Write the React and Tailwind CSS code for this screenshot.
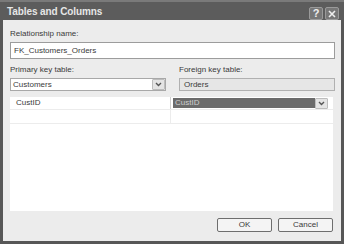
import React from "react";

const Chevron = () => (
  <svg width="7" height="5" viewBox="0 0 7 5" fill="none">
    <path d="M1 1 L3.5 3.5 L6 1" stroke="#555" strokeWidth="1.4" />
  </svg>
);

const DropBtn = () => (
  <div className="w-[13px] h-[11px] bg-[#e4e4e4] border border-[#bdbdbd] rounded-[1px] flex items-center justify-center">
    <Chevron />
  </div>
);

export default function App() {
  return (
    <div className="w-[344px] h-[244px] bg-[#575757] flex flex-col font-['Liberation_Sans',sans-serif] text-[#3a3a3a]">
      {/* Title bar */}
      <div className="h-[20px] flex items-center justify-between pl-[7px] pr-[5px] border-t-2 border-[#7a7a7a] bg-[#5c5c5c]">
        <span className="text-[10px] font-bold text-[#e6e6e6] tracking-[-0.1px] mt-[1px]">Tables and Columns</span>
        <div className="flex gap-[2px] mt-[5px]">
          <div className="w-[14px] h-[13px] rounded-[2px] border border-[#9a9a9a] bg-[#777] flex items-center justify-center text-[11px] font-bold leading-none text-[#eee]">?</div>
          <div className="w-[14px] h-[13px] rounded-[2px] border border-[#9a9a9a] bg-[#777] flex items-center justify-center">
            <svg width="8" height="8" viewBox="0 0 8 8">
              <path d="M1 1 L7 7 M7 1 L1 7" stroke="#eee" strokeWidth="1.6" />
            </svg>
          </div>
        </div>
      </div>

      {/* Body */}
      <div className="flex-1 flex flex-col bg-[#ececec] mx-[3px] mb-[3px] pl-[7px] pr-[6px] pt-[9px] pb-[9px] text-[8px] leading-[10px]">
        <div>Relationship name:</div>
        <div className="mt-[3px] h-[17px] bg-white border border-[#9c9c9c] flex items-center pl-[3px]">FK_Customers_Orders</div>

        <div className="mt-[6px] flex gap-[13px]">
          <div className="w-[156px] flex flex-col">
            <div>Primary key table:</div>
            <div className="mt-[3px] h-[13px] bg-white border border-[#a8a8a8] flex items-center justify-between pl-[2px]">
              <span>Customers</span>
              <DropBtn />
            </div>
          </div>
          <div className="flex-1 flex flex-col">
            <div>Foreign key table:</div>
            <div className="mt-[3px] h-[13px] bg-[#e6e6e6] border border-[#b0b0b0] flex items-center pl-[4px]">Orders</div>
          </div>
        </div>

        {/* Grid */}
        <div className="mt-[6px] h-[114px] mr-[2px] bg-white flex flex-col">
          <div className="h-[13px] flex border-b border-[#ececec]">
            <div className="w-[161px] border-r border-[#cfcfcf] pl-[6px] flex items-center">CustID</div>
            <div className="flex-1 flex items-center pl-[2px] pr-[5px]">
              <div className="flex-1 h-[10px] bg-[#6b6b6b] text-[#cfcfcf] pl-[2px] flex items-center">CustID</div>
              <DropBtn />
            </div>
          </div>
          <div className="h-[14px] flex border-b border-[#ececec]">
            <div className="w-[161px] border-r border-[#ececec]" />
            <div className="flex-1" />
          </div>
        </div>

        {/* Buttons */}
        <div className="mt-auto flex justify-end gap-[6px] pr-[2px]">
          <div className="w-[55px] h-[14px] rounded-[2px] border border-[#6e6e6e] bg-[#f4f4f4] flex items-center justify-center">OK</div>
          <div className="w-[55px] h-[14px] rounded-[2px] border border-[#6e6e6e] bg-[#f4f4f4] flex items-center justify-center">Cancel</div>
        </div>
      </div>
    </div>
  );
}
